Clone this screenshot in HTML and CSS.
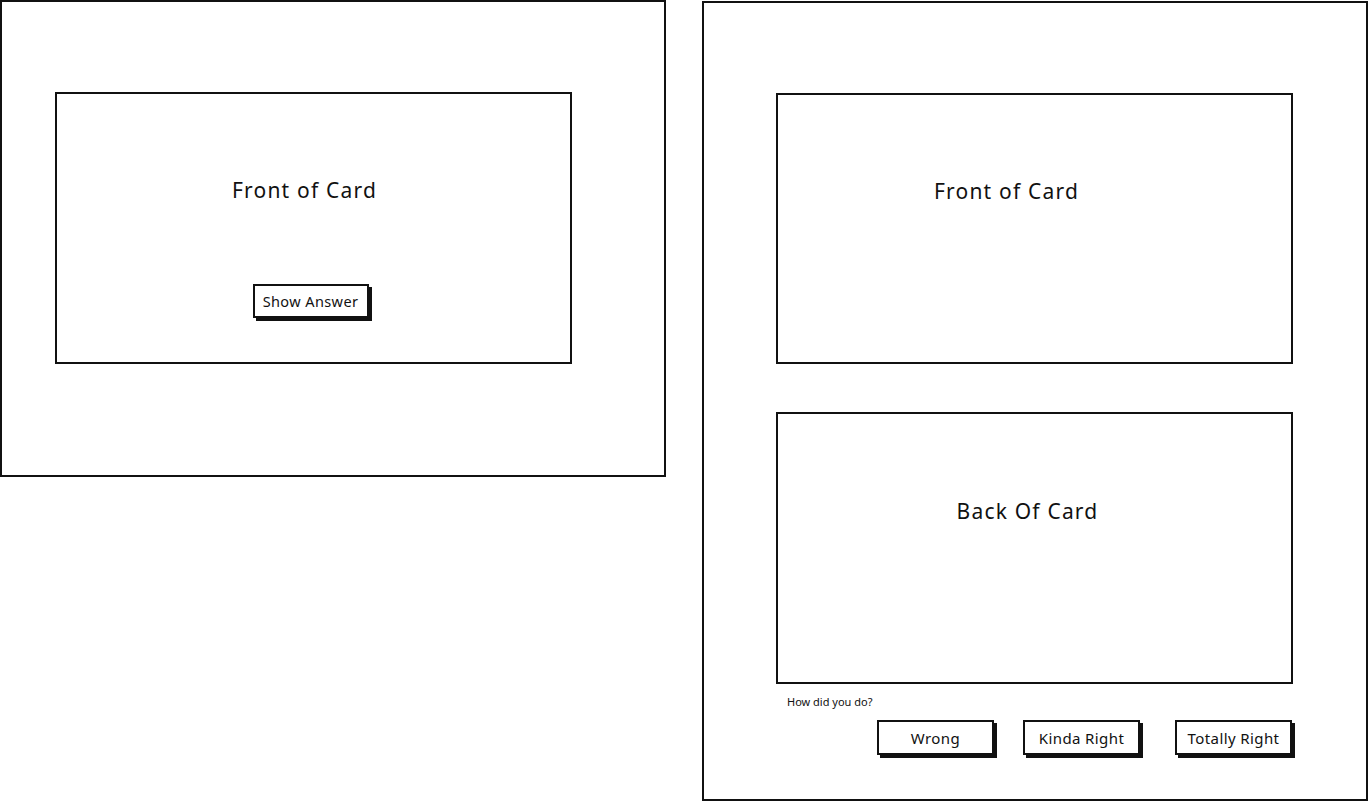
FILE: index.html
```html
<!DOCTYPE html>
<html>
<head>
<meta charset="utf-8">
<link rel="stylesheet" href="styles.css">
</head>
<body>
<div class="page">
  <div class="frame frame-left">
    <div class="card card-left">
      <div class="card-title">Front of Card</div>
      <button class="btn btn-show">Show Answer</button>
    </div>
  </div>
  <div class="frame frame-right">
    <div class="card card-front">
      <div class="card-title">Front of Card</div>
    </div>
    <div class="card card-back">
      <div class="card-title">Back Of Card</div>
    </div>
    <div class="prompt">How did you do?</div>
    <div class="answers">
      <button class="btn btn-answer">Wrong</button>
      <button class="btn btn-answer">Kinda Right</button>
      <button class="btn btn-answer btn-last">Totally Right</button>
    </div>
  </div>
</div>
</body>
</html>
```
FILE: styles.css
```css
html, body {
  margin: 0;
  padding: 0;
  background: #fff;
}
body {
  font-family: "Noto Sans", "DejaVu Sans", sans-serif;
  color: #111;
}
.page {
  display: flex;
  align-items: flex-start;
  width: 1369px;
  height: 802px;
}
.frame {
  box-sizing: border-box;
  border: 2px solid #111;
  background: #fff;
}
.frame-left {
  width: 666px;
  height: 477px;
  padding: 90px 0 0 53px;
}
.frame-right {
  width: 666px;
  height: 800px;
  margin-left: 36px;
  margin-top: 1px;
  padding: 90px 0 0 72px;
  display: flex;
  flex-direction: column;
}
.card {
  box-sizing: border-box;
  border: 2px solid #111;
  width: 517px;
  height: 271px;
  display: flex;
  flex-direction: column;
  align-items: center;
}
.card-title {
  font-size: 21px;
  line-height: 24px;
  letter-spacing: 1.2px;
}
.card-left {
  height: 272px;
  padding-top: 84px;
}
.card-left .card-title {
  margin-right: 18px;
}
.card-front {
  padding-top: 84px;
  padding-right: 56px;
}
.card-back {
  margin-top: 48px;
  padding-top: 85px;
  padding-right: 14px;
  height: 272px;
}
.btn {
  box-sizing: border-box;
  background: #fff;
  border: 2px solid #111;
  box-shadow: 3px 3px 0 #111;
  font-family: "Noto Sans", "DejaVu Sans", sans-serif;
  font-size: 14px;
  letter-spacing: 0.4px;
  color: #111;
  padding: 0;
}
.btn-show {
  margin-top: 82px;
  margin-right: 6px;
  width: 116px;
  height: 34px;
  font-size: 14.5px;
}
.prompt {
  font-size: 11px;
  line-height: 14px;
  margin-top: 11px;
  margin-left: 11px;
}
.answers {
  display: flex;
  justify-content: flex-end;
  gap: 29px;
  width: 517px;
  box-sizing: border-box;
  padding-right: 1px;
  margin-top: 11px;
}
.btn-answer {
  width: 117px;
  height: 35px;
  font-size: 15px;
}
.btn-last {
  margin-left: 6px;
}
```
